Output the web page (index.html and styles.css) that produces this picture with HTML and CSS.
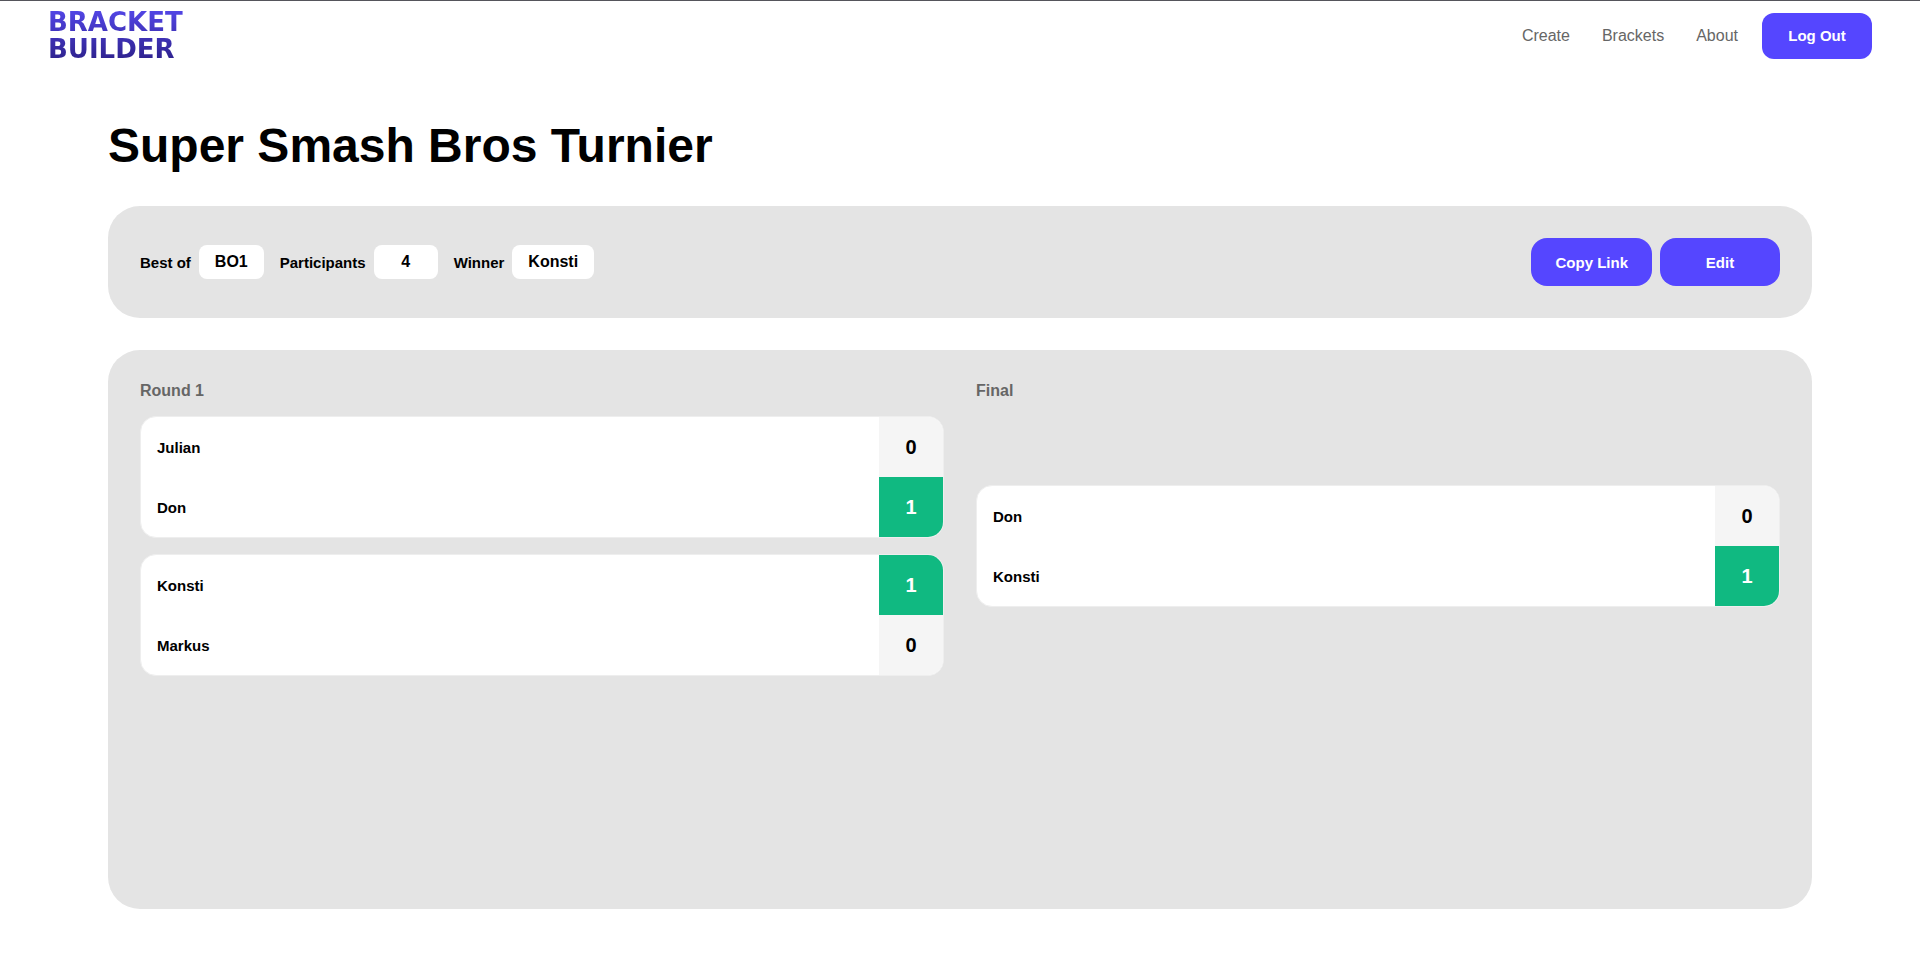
FILE: index.html
```html
<!DOCTYPE html>
<html lang="en">
<head>
<meta charset="UTF-8" />
<meta name="viewport" content="width=device-width, initial-scale=1" />
<title>Bracket Builder</title>
<link rel="stylesheet" href="styles.css">
</head>
<body>

<header class="header">
  <a class="logo" href="#"><span>BRACKET</span><span>BUILDER</span></a>
  <nav class="nav">
    <a href="#">Create</a>
    <a href="#">Brackets</a>
    <a href="#">About</a>
    <button class="btn btn-logout" type="button">Log Out</button>
  </nav>
</header>

<main class="main">
  <h1>Super Smash Bros Turnier</h1>

  <section class="card info">
    <dl class="facts">
      <div class="fact"><dt>Best of</dt><dd>BO1</dd></div>
      <div class="fact"><dt>Participants</dt><dd>4</dd></div>
      <div class="fact"><dt>Winner</dt><dd>Konsti</dd></div>
    </dl>
    <div class="actions">
      <button class="btn" type="button">Copy Link</button>
      <button class="btn" type="button">Edit</button>
    </div>
  </section>

  <section class="card bracket">
    <div class="round">
      <h2>Round 1</h2>
      <div class="matches">
        <div class="match">
          <div class="player"><span class="name">Julian</span><span class="score">0</span></div>
          <div class="player winner"><span class="name">Don</span><span class="score">1</span></div>
        </div>
        <div class="match">
          <div class="player winner"><span class="name">Konsti</span><span class="score">1</span></div>
          <div class="player"><span class="name">Markus</span><span class="score">0</span></div>
        </div>
      </div>
    </div>
    <div class="round">
      <h2>Final</h2>
      <div class="matches">
        <div class="match">
          <div class="player"><span class="name">Don</span><span class="score">0</span></div>
          <div class="player winner"><span class="name">Konsti</span><span class="score">1</span></div>
        </div>
      </div>
    </div>
  </section>
</main>

</body>
</html>
```
FILE: styles.css
```css
* {
  box-sizing: border-box;
}
body {
  font-family: "Liberation Sans", Arial, sans-serif;
  font-size: 15px;
  background: #fff;
  color: #000;
  margin: 0;
  min-height: 100vh;
  display: flex;
  flex-direction: column;
}

/* Header */
.header {
  display: flex;
  justify-content: space-between;
  align-items: center;
  min-height: 70px;
  padding: 0 48px;
  border-top: 1px solid #55555b;
}
.logo {
  display: flex;
  flex-direction: column;
  font-family: "DejaVu Sans", sans-serif;
  font-size: 26px;
  font-weight: bold;
  line-height: 27px;
  text-decoration: none;
  color: transparent;
  background: linear-gradient(#5346e8, #2c2088);
  background-clip: text;
  -webkit-background-clip: text;
}
.nav {
  display: flex;
  align-items: center;
  gap: 32px;
}
.nav a {
  font-size: 16px;
  color: #666;
  text-decoration: none;
}

/* Buttons */
.btn {
  min-width: 120px;
  height: 48px;
  padding: 0 24px;
  border: none;
  border-radius: 16px;
  background: #5546ff;
  color: #fff;
  font-family: inherit;
  font-size: 15px;
  font-weight: bold;
  cursor: pointer;
}
.btn:hover {
  background: #4436e0;
}
.btn-logout {
  min-width: 110px;
  height: 46px;
  margin-left: -8px;
  border-radius: 12px;
}

/* Content */
.main {
  flex: 1;
  display: flex;
  flex-direction: column;
  gap: 32px;
  padding: 48px 108px 50px;
}
h1 {
  margin: 0;
  font-size: 48px;
  line-height: 56px;
}
.card {
  background: #e4e4e4;
  border-radius: 32px;
  padding: 32px;
}
.info {
  display: flex;
  justify-content: space-between;
  align-items: center;
}
.facts {
  display: flex;
  gap: 16px;
  margin: 0;
  font-weight: bold;
}
.fact {
  display: flex;
  align-items: center;
  gap: 8px;
}
.fact dd {
  min-width: 64px;
  margin: 0;
  padding: 0 16px;
  border-radius: 8px;
  background: #fff;
  font-size: 16px;
  line-height: 34px;
  text-align: center;
}
.actions {
  display: flex;
  gap: 8px;
}

/* Bracket */
.bracket {
  flex: 1;
  display: grid;
  grid-template-columns: 1fr 1fr;
  grid-template-rows: max-content;
  gap: 32px;
}
.round {
  display: flex;
  flex-direction: column;
  gap: 16px;
}
.round h2 {
  margin: 0;
  font-size: 16px;
  line-height: 18px;
  color: #666;
}
.matches {
  flex: 1;
  display: flex;
  flex-direction: column;
  justify-content: center;
  gap: 16px;
}
.match {
  border: 1px solid #eee;
  border-radius: 16px;
  background: #fff;
  overflow: hidden;
}
.player {
  display: flex;
  justify-content: space-between;
  align-items: center;
  height: 60px;
  padding-left: 16px;
  font-weight: bold;
}
.score {
  width: 64px;
  background: #f5f5f5;
  font-size: 20px;
  line-height: 60px;
  text-align: center;
}
.winner .score {
  background: #10b981;
  color: #fff;
}
```
